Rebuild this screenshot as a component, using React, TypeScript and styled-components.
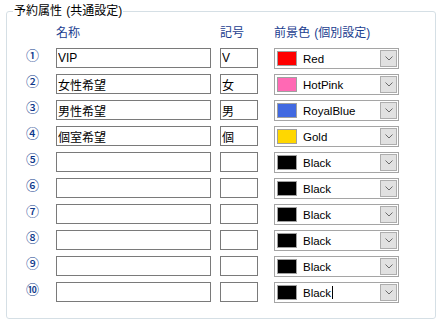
import styled, { createGlobalStyle } from "styled-components";

const GlobalStyle = createGlobalStyle`
  body {
    margin: 0;
    background: #ffffff;
    font-family: "Liberation Sans", "Noto Sans CJK JP", sans-serif;
  }
`;

const Page = styled.div`
  width: 442px;
  height: 325px;
  padding: 11px 0 0 6px;
  box-sizing: border-box;
`;

const Group = styled.div`
  position: relative;
  width: 430px;
  height: 308px;
  box-sizing: border-box;
  border: 1px solid #d5dfe5;
  border-radius: 3px;
  padding: 14px 0 0 0;
`;

const Legend = styled.div`
  position: absolute;
  top: -8px;
  left: 6px;
  padding: 0 1px;
  background: #ffffff;
  font-size: 12px;
  line-height: 14px;
  color: #000000;
  word-spacing: 1px;
`;

const Grid = styled.div`
  display: grid;
  grid-template-columns: 49px 164px 54px 125px;
  grid-template-rows: 16px;
  grid-auto-rows: 20px;
  row-gap: 6px;
`;

const Header = styled.div`
  font-size: 12px;
  line-height: 14px;
  height: 14px;
  color: #1a3d8f;
  white-space: nowrap;
  word-spacing: 1px;
`;

const Num = styled.div`
  padding-left: 19px;
  font-family: "Noto Sans CJK JP", sans-serif;
  font-size: 13px;
  line-height: 13px;
  font-weight: 500;
  color: #0f3a8c;
`;

const TextBox = styled.input<{ $w: number }>`
  width: ${(p) => p.$w}px;
  height: 20px;
  box-sizing: border-box;
  margin: 0;
  padding: 0 1px;
  border: 1px solid #7a7a7a;
  outline: none;
  background: #ffffff;
  font-family: "Liberation Sans", "Noto Sans CJK JP", sans-serif;
  font-size: 12px;
  color: #000000;
`;

const Combo = styled.div`
  width: 125px;
  height: 21px;
  box-sizing: border-box;
  border: 1px solid #a5a5a5;
  display: flex;
  align-items: center;
  padding: 0 1px 0 2px;
  background: #ffffff;
`;

const Swatch = styled.span<{ $c: string }>`
  width: 20px;
  height: 15px;
  box-sizing: border-box;
  border: 1px solid #a0a0a0;
  background: ${(p) => p.$c};
  flex: none;
`;

const ComboLabel = styled.span`
  flex: 1;
  margin-left: 6px;
  font-size: 11.5px;
  color: #000000;
  display: flex;
  align-items: center;
`;

const Caret = styled.span`
  display: inline-block;
  width: 1px;
  height: 13px;
  background: #000000;
  margin-left: 1px;
`;

const DropButton = styled.span`
  width: 17px;
  height: 17px;
  box-sizing: border-box;
  border: 1px solid #adadad;
  background: #e1e1e1;
  display: flex;
  align-items: center;
  justify-content: center;
  flex: none;
`;

const rows = [
  { name: "VIP", mark: "V", color: "#ff0000", label: "Red" },
  { name: "女性希望", mark: "女", color: "#ff69b4", label: "HotPink" },
  { name: "男性希望", mark: "男", color: "#4169e1", label: "RoyalBlue" },
  { name: "個室希望", mark: "個", color: "#ffd700", label: "Gold" },
  { name: "", mark: "", color: "#000000", label: "Black" },
  { name: "", mark: "", color: "#000000", label: "Black" },
  { name: "", mark: "", color: "#000000", label: "Black" },
  { name: "", mark: "", color: "#000000", label: "Black" },
  { name: "", mark: "", color: "#000000", label: "Black" },
  { name: "", mark: "", color: "#000000", label: "Black" },
];

const circled = ["①", "②", "③", "④", "⑤", "⑥", "⑦", "⑧", "⑨", "⑩"];

export default function App() {
  return (
    <>
      <GlobalStyle />
      <Page>
        <Group>
          <Legend>予約属性 (共通設定)</Legend>
          <Grid>
            <div />
            <Header>名称</Header>
            <Header>記号</Header>
            <Header>前景色 (個別設定)</Header>
            {rows.map((r, i) => (
              <Row key={i} index={i} {...r} last={i === rows.length - 1} />
            ))}
          </Grid>
        </Group>
      </Page>
    </>
  );
}

function Row(props: {
  index: number;
  name: string;
  mark: string;
  color: string;
  label: string;
  last: boolean;
}) {
  return (
    <>
      <Num>{circled[props.index]}</Num>
      <TextBox $w={155} readOnly defaultValue={props.name} />
      <TextBox $w={38} readOnly defaultValue={props.mark} />
      <Combo>
        <Swatch $c={props.color} />
        <ComboLabel>
          {props.label}
          {props.last && <Caret />}
        </ComboLabel>
        <DropButton>
          <svg width="8" height="5" viewBox="0 0 8 5">
            <polyline points="0.5,0.5 4,4 7.5,0.5" fill="none" stroke="#6a6a6a" strokeWidth="1" />
          </svg>
        </DropButton>
      </Combo>
    </>
  );
}
